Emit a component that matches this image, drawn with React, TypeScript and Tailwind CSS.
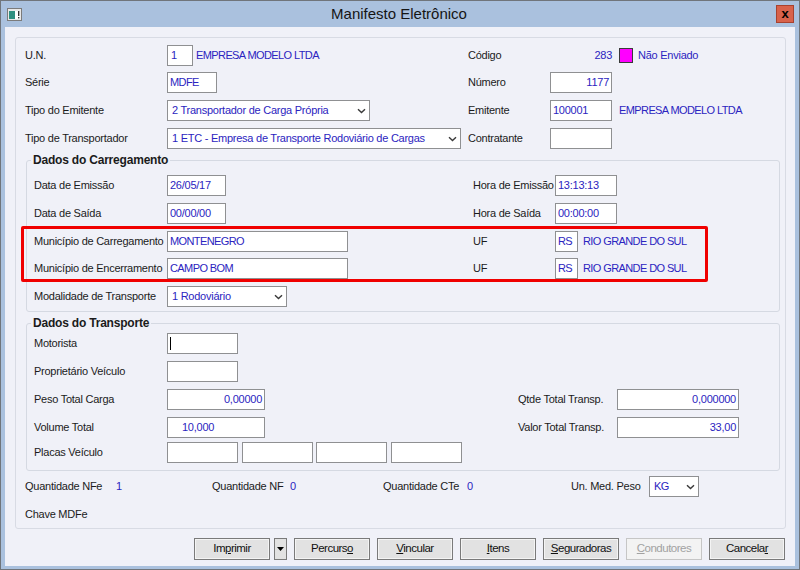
import type { ReactNode } from 'react';
import clsx from 'clsx';

function Box({ w, children, right, className }: { w: string; children?: ReactNode; right?: boolean; className?: string }) {
  return (
    <div
      className={clsx(
        'h-[21px] shrink-0 border border-[#8f9092] bg-white flex items-center px-[2px] overflow-hidden whitespace-nowrap text-[#2b24c0]',
        right && 'justify-end',
        w,
        className
      )}
    >
      {children}
    </div>
  );
}

function Combo({ w, children }: { w: string; children: ReactNode }) {
  return (
    <div className={clsx('h-[21px] shrink-0 border border-[#8f9092] bg-white flex items-center pl-[4px] pr-[3px] text-[#2b24c0] whitespace-nowrap', w)}>
      <span className="flex-1 overflow-hidden">{children}</span>
      <svg width="9" height="6" viewBox="0 0 9 6" className="shrink-0">
        <path d="M1 1.2 L4.5 4.6 L8 1.2" fill="none" stroke="#3a3a3a" strokeWidth="1.4" />
      </svg>
    </div>
  );
}

function Lbl({ w, children }: { w: string; children?: ReactNode }) {
  return <div className={clsx('shrink-0 whitespace-nowrap', w)}>{children}</div>;
}

// uppercase values are a bit narrower in the original font
function Up({ children, className }: { children: ReactNode; className?: string }) {
  return <span className={clsx('tracking-[-0.6px] text-[#2b24c0]', className)}>{children}</span>;
}

function Btn({ children, disabled }: { children: ReactNode; disabled?: boolean }) {
  return (
    <div
      className={clsx(
        'w-[76px] h-[22px] border flex items-center justify-center',
        disabled
          ? 'border-[#c6c6c6] bg-[#f3f3f3] text-[#a2a2a2]'
          : 'border-[#7a7a7a] bg-[#e2e2e2] text-[#111] shadow-[inset_0_0_0_1px_#f4f4f4]'
      )}
    >
      {children}
    </div>
  );
}

export default function App() {
  return (
    <div className="relative w-[800px] h-[570px] overflow-hidden border border-[#70757b] bg-[#aac1de] flex flex-col font-['Liberation_Sans',Arial,sans-serif] text-[11px] tracking-[-0.25px] text-[#1b1b1b]">
      {/* Title bar */}
      <div className="h-[26px] shrink-0 flex items-center">
        <svg width="15" height="13" viewBox="0 0 15 13" className="ml-[6px] shrink-0">
          <rect x="0.5" y="0.5" width="14" height="12" fill="#e8e8e8" stroke="#7b7b7b" />
          <rect x="2" y="3" width="6" height="8" fill="#2f8f80" />
          <rect x="8" y="3" width="5" height="8" fill="#ffffff" />
          <rect x="11" y="3" width="1.4" height="5" fill="#333" />
          <rect x="11" y="9" width="1.4" height="1.4" fill="#333" />
        </svg>
        <div className="flex-1 text-center text-[15px] tracking-normal text-[#151515]">Manifesto Eletrônico</div>
        <div className="mr-[5px] w-[18px] h-[18px] shrink-0 bg-[#d8624b] border border-[#a8422f] flex items-center justify-center text-[13px] font-bold leading-none text-black tracking-normal pb-[2px]">
          x
        </div>
      </div>

      {/* Client */}
      <div className="ml-[4px] w-[790px] h-[539px] bg-[#f0f1f8] flex flex-col">
        <div className="ml-[10px] mt-[10px] w-[771px] h-[492px] rounded-[3px] border border-[#d8dbe4] pl-[9px] pt-[7px]">
          {/* Header rows */}
          <div className="flex items-center h-[21px] mb-[6px]">
            <div className="w-[443px] shrink-0 flex items-center">
              <Lbl w="w-[142px]">U.N.</Lbl>
              <Box w="w-[26px]" className="pl-[3px]">1</Box>
              <Up className="ml-[3px]">EMPRESA MODELO LTDA</Up>
            </div>
            <Lbl w="w-[82px]">Código</Lbl>
            <div className="w-[62px] text-right text-[#2b24c0]">283</div>
            <div className="ml-[7px] w-[14px] h-[15px] bg-[#ff00ff] border border-[#3a3a3a]" />
            <span className="ml-[5px] text-[#2b24c0]">Não Enviado</span>
          </div>

          <div className="flex items-center h-[21px] mb-[7px]">
            <div className="w-[443px] shrink-0 flex items-center">
              <Lbl w="w-[142px]">Série</Lbl>
              <Box w="w-[50px]" className="px-[1px]"><Up>MDFE</Up></Box>
            </div>
            <Lbl w="w-[82px]">Número</Lbl>
            <Box w="w-[62px]" right>1177</Box>
          </div>

          <div className="flex items-center h-[21px] mb-[7px]">
            <div className="w-[443px] shrink-0 flex items-center">
              <Lbl w="w-[142px]">Tipo do Emitente</Lbl>
              <Combo w="w-[203px]">2 Transportador de Carga Própria</Combo>
            </div>
            <Lbl w="w-[82px]">Emitente</Lbl>
            <Box w="w-[62px]">100001</Box>
            <Up className="ml-[7px]">EMPRESA MODELO LTDA</Up>
          </div>

          <div className="flex items-center h-[21px]">
            <div className="w-[443px] shrink-0 flex items-center">
              <Lbl w="w-[142px]">Tipo de Transportador</Lbl>
              <Combo w="w-[294px]">1 ETC - Empresa de Transporte Rodoviário de Cargas</Combo>
            </div>
            <Lbl w="w-[82px]">Contratante</Lbl>
            <Box w="w-[62px]" />
          </div>

          {/* Dados do Carregamento */}
          <div className="relative ml-[1px] mt-[11px] w-[754px] rounded-[3px] border border-[#d5d9e2] pl-[7px] pt-[14px] pb-[4px]">
            <div className="absolute -top-[8px] left-[4px] px-[2px] bg-[#f0f1f8] text-[12px] leading-[14px] font-bold tracking-[-0.2px]">
              Dados do Carregamento
            </div>

            <div className="flex items-center h-[21px] mb-[7px]">
              <div className="w-[439px] shrink-0 flex items-center">
                <Lbl w="w-[133px]">Data de Emissão</Lbl>
                <Box w="w-[59px]">26/05/17</Box>
              </div>
              <Lbl w="w-[82px]">Hora de Emissão</Lbl>
              <Box w="w-[62px]">13:13:13</Box>
            </div>

            <div className="flex items-center h-[21px] mb-[7px]">
              <div className="w-[439px] shrink-0 flex items-center">
                <Lbl w="w-[133px]">Data de Saída</Lbl>
                <Box w="w-[59px]">00/00/00</Box>
              </div>
              <Lbl w="w-[82px]">Hora de Saída</Lbl>
              <Box w="w-[62px]">00:00:00</Box>
            </div>

            <div className="flex items-center h-[21px] mb-[6px]">
              <div className="w-[439px] shrink-0 flex items-center">
                <Lbl w="w-[133px]">Município de Carregamento</Lbl>
                <Box w="w-[181px]" className="px-[1px]"><Up>MONTENEGRO</Up></Box>
              </div>
              <Lbl w="w-[82px]">UF</Lbl>
              <Box w="w-[23px]" className="px-[1px]"><Up>RS</Up></Box>
              <Up className="ml-[5px]">RIO GRANDE DO SUL</Up>
            </div>

            <div className="flex items-center h-[21px] mb-[7px]">
              <div className="w-[439px] shrink-0 flex items-center">
                <Lbl w="w-[133px]">Município de Encerramento</Lbl>
                <Box w="w-[181px]" className="px-[1px]"><Up>CAMPO BOM</Up></Box>
              </div>
              <Lbl w="w-[82px]">UF</Lbl>
              <Box w="w-[23px]" className="px-[1px]"><Up>RS</Up></Box>
              <Up className="ml-[5px]">RIO GRANDE DO SUL</Up>
            </div>

            <div className="flex items-center h-[21px]">
              <Lbl w="w-[133px]">Modalidade de Transporte</Lbl>
              <Combo w="w-[120px]">1 Rodoviário</Combo>
            </div>
          </div>

          {/* Dados do Transporte */}
          <div className="relative ml-[1px] mt-[11px] w-[754px] rounded-[3px] border border-[#d5d9e2] pl-[7px] pt-[9px] pb-[7px]">
            <div className="absolute -top-[8px] left-[4px] px-[2px] bg-[#f0f1f8] text-[12px] leading-[14px] font-bold tracking-[-0.2px]">
              Dados do Transporte
            </div>

            <div className="flex items-center h-[21px] mb-[7px]">
              <Lbl w="w-[133px]">Motorista</Lbl>
              <Box w="w-[71px]">
                <span className="w-[1px] h-[13px] bg-black" />
              </Box>
            </div>

            <div className="flex items-center h-[21px] mb-[7px]">
              <Lbl w="w-[133px]">Proprietário Veículo</Lbl>
              <Box w="w-[71px]" />
            </div>

            <div className="flex items-center h-[21px] mb-[7px]">
              <div className="w-[484px] shrink-0 flex items-center">
                <Lbl w="w-[133px]">Peso Total Carga</Lbl>
                <Box w="w-[98px]" right>0,00000</Box>
              </div>
              <Lbl w="w-[99px]">Qtde Total Transp.</Lbl>
              <Box w="w-[122px]" right>0,000000</Box>
            </div>

            <div className="flex items-center h-[21px] mb-[4px]">
              <div className="w-[484px] shrink-0 flex items-center">
                <Lbl w="w-[133px]">Volume Total</Lbl>
                <Box w="w-[98px]" className="pl-[14px]">10,000</Box>
              </div>
              <Lbl w="w-[99px]">Valor Total Transp.</Lbl>
              <Box w="w-[122px]" right>33,00</Box>
            </div>

            <div className="flex items-center h-[21px]">
              <Lbl w="w-[133px]">Placas Veículo</Lbl>
              <Box w="w-[71px]" />
              <Box w="w-[71px]" className="ml-[4px]" />
              <Box w="w-[71px]" className="ml-[3px]" />
              <Box w="w-[71px]" className="ml-[4px]" />
            </div>
          </div>

          {/* Totais */}
          <div className="flex items-center h-[21px] mt-[5px]">
            <Lbl w="w-[91px]">Quantidade NFe</Lbl>
            <Lbl w="w-[96px]"><span className="text-[#2b24c0]">1</span></Lbl>
            <Lbl w="w-[78px]">Quantidade NF</Lbl>
            <Lbl w="w-[93px]"><span className="text-[#2b24c0]">0</span></Lbl>
            <Lbl w="w-[84px]">Quantidade CTe</Lbl>
            <Lbl w="w-[104px]"><span className="text-[#2b24c0]">0</span></Lbl>
            <Lbl w="w-[78px]">Un. Med. Peso</Lbl>
            <Combo w="w-[50px]"><Up>KG</Up></Combo>
          </div>

          <div className="flex items-center h-[21px] mt-[7px]">
            <Lbl w="w-[100px]">Chave MDFe</Lbl>
          </div>
        </div>

        {/* Buttons */}
        <div className="mt-[9px] flex justify-end gap-[7px] pr-[10px] text-[11.5px] tracking-[-0.5px]">
          <div className="flex gap-[4px]">
            <Btn>
              <span>Im<u>p</u>rimir</span>
            </Btn>
            <div className="w-[13px] h-[22px] border border-[#7a7a7a] bg-[#e2e2e2] flex items-center justify-center">
              <svg width="7" height="4" viewBox="0 0 7 4">
                <path d="M0 0 H7 L3.5 4 Z" fill="#000" />
              </svg>
            </div>
          </div>
          <Btn>
            <span>Percurs<u>o</u></span>
          </Btn>
          <Btn>
            <span><u>V</u>incular</span>
          </Btn>
          <Btn>
            <span><u>I</u>tens</span>
          </Btn>
          <Btn>
            <span><u>S</u>eguradoras</span>
          </Btn>
          <Btn disabled>
            <span><u>C</u>ondutores</span>
          </Btn>
          <Btn>
            <span>Cancela<u>r</u></span>
          </Btn>
        </div>
      </div>

      {/* Highlight annotation */}
      <div className="absolute left-[20px] top-[225px] w-[687px] h-[56px] rounded-[2px] border-[3px] border-[#f00000]" />
    </div>
  );
}
